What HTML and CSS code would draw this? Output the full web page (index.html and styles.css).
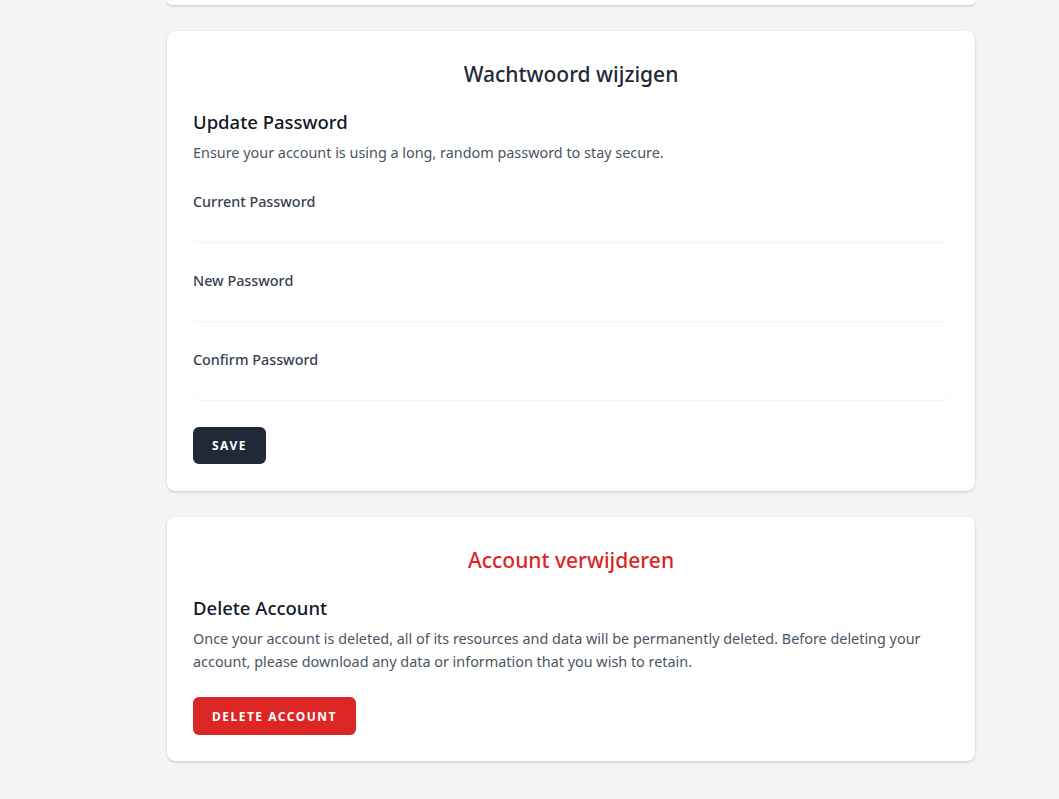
FILE: index.html
```html
<!DOCTYPE html>
<html lang="nl">
<head>
<meta charset="utf-8">
<title>Profiel</title>
<link rel="stylesheet" href="styles.css">
</head>
<body>
<main class="page">
  <div class="card card-stub"></div>

  <section class="card">
    <h2 class="card-title">Wachtwoord wijzigen</h2>
    <h3 class="section-title">Update Password</h3>
    <p class="section-desc">Ensure your account is using a long, random password to stay secure.</p>
    <form class="form">
      <div class="field">
        <label class="label" for="current">Current Password</label>
        <input class="input" id="current" type="password">
      </div>
      <div class="field">
        <label class="label" for="new">New Password</label>
        <input class="input" id="new" type="password">
      </div>
      <div class="field">
        <label class="label" for="confirm">Confirm Password</label>
        <input class="input" id="confirm" type="password">
      </div>
      <div class="actions">
        <button class="btn btn-dark" type="button">Save</button>
      </div>
    </form>
  </section>

  <section class="card card-last">
    <h2 class="card-title danger">Account verwijderen</h2>
    <h3 class="section-title">Delete Account</h3>
    <p class="section-desc">Once your account is deleted, all of its resources and data will be permanently deleted. Before deleting your account, please download any data or information that you wish to retain.</p>
    <div class="actions actions-delete">
      <button class="btn btn-danger" type="button">Delete Account</button>
    </div>
  </section>
</main>
</body>
</html>
```

FILE: styles.css
```css
* { box-sizing: border-box; }

html, body {
  margin: 0;
  padding: 0;
  background: #f3f4f6;
  font-family: "Noto Sans", "Open Sans", sans-serif;
  color: #111827;
}

.page {
  width: 808px;
  margin-left: 167px;
  display: flex;
  flex-direction: column;
  gap: 26px;
  padding-bottom: 38px;
}

.card {
  background: #ffffff;
  border-radius: 8px;
  box-shadow: 0 1px 3px rgba(0, 0, 0, 0.12), 0 1px 2px rgba(0, 0, 0, 0.08);
  padding: 26px 26px 27px;
}

.card-last { padding-bottom: 26px; }

.card-stub {
  height: 5px;
  padding: 0;
  border-radius: 0 0 8px 8px;
}

.card-title {
  margin: 0;
  text-align: center;
  font-size: 21px;
  line-height: 34px;
  font-weight: 500;
  color: #1f2937;
}

.card-title.danger { color: #dc2626; }

.section-title {
  margin: 17px 0 0;
  font-size: 18.5px;
  line-height: 28px;
  font-weight: 500;
  color: #111827;
}

.section-desc {
  margin: 5px 0 0;
  font-size: 14.4px;
  line-height: 23px;
  color: #4b5563;
}

.form {
  display: flex;
  flex-direction: column;
}

.field {
  display: flex;
  flex-direction: column;
  margin-top: 28px;
}

.field + .field { margin-top: 29px; }

.label {
  font-size: 14.35px;
  line-height: 20px;
  font-weight: 500;
  color: #374151;
}

.input {
  margin-top: 1px;
  height: 29px;
  border: none;
  border-radius: 6px;
  background: #ffffff;
  box-shadow: 0 1px 2px rgba(0, 0, 0, 0.05);
  outline: none;
}

.actions {
  margin-top: 27px;
  display: flex;
}

.actions-delete { margin-top: 24px; }

.btn {
  border: none;
  border-radius: 6px;
  font-family: inherit;
  font-size: 12px;
  font-weight: 700;
  letter-spacing: 0.125em;
  text-transform: uppercase;
  color: #ffffff;
  padding: 0 19px;
  cursor: pointer;
}

.btn-dark {
  background: #1f2937;
  height: 37px;
}

.btn-danger {
  background: #dc2626;
  height: 38px;
}
```
